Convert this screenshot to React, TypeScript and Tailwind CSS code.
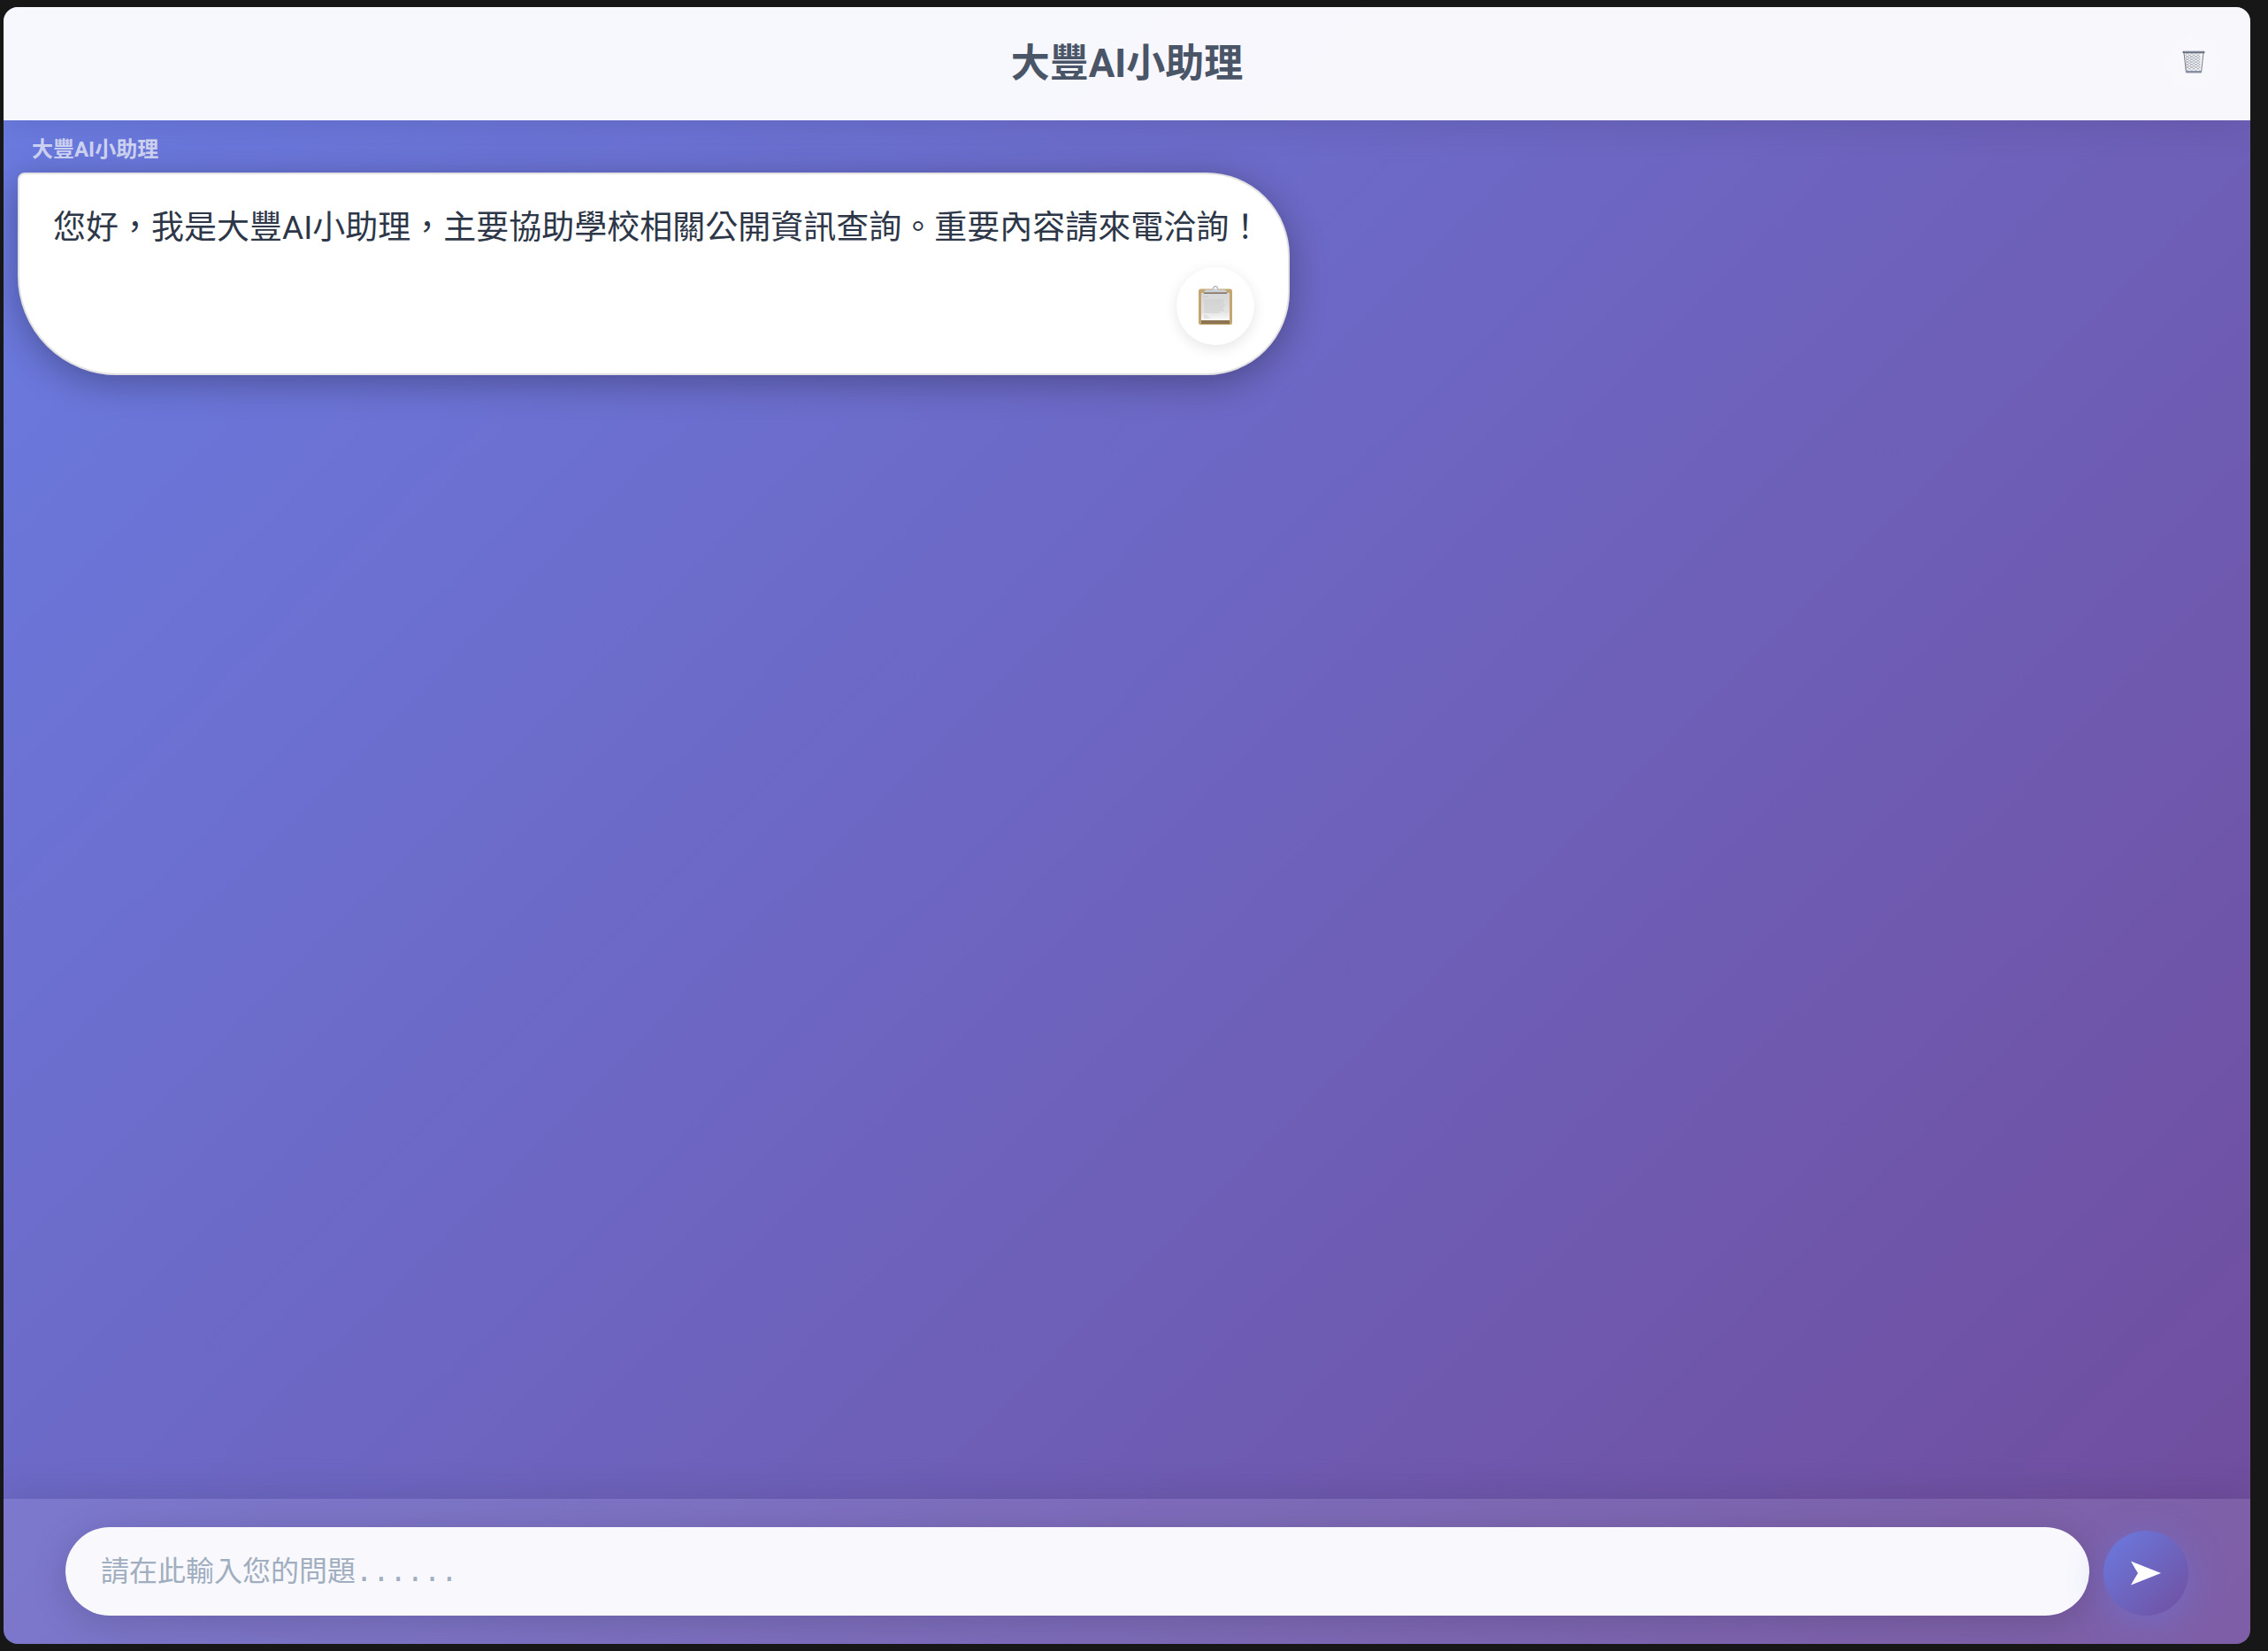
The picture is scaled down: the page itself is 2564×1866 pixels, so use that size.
import { useState } from 'react'

const ROWS = [5, 8, 11, 14, 17, 20]

function TrashIcon() {
  return (
    <svg viewBox="0 0 26 26" className="h-6.5 w-6.5" aria-hidden="true">
      <path d="M2 2.5 L24 2.5 L21.5 25 L4.5 25 Z" fill="#f4f5f8" />
      <g stroke="#a3a8b1" strokeWidth="0.7" fill="none">
        {ROWS.map((y) => (
          <g key={y}>
            <path d={`M3.5 ${y} l2.4 3 l2.4 -3 l2.4 3 l2.4 -3 l2.4 3 l2.4 -3 l2.4 3`} />
            <path d={`M3.5 ${y + 1} l2.4 -3 l2.4 3 l2.4 -3 l2.4 3 l2.4 -3 l2.4 3 l2.4 -3`} />
          </g>
        ))}
      </g>
      <path d="M2 2.5 L4.5 25 M24 2.5 L21.5 25" stroke="#7f8794" strokeWidth="1.1" />
      <rect x="0.5" y="0.8" width="25" height="2.4" rx="1" fill="#666e7d" />
      <path d="M2 1.6 H24" stroke="#9aa2af" strokeWidth="0.6" />
      <rect x="4" y="23" width="18" height="2.4" rx="0.8" fill="#8791a2" />
    </svg>
  )
}

function ClipboardIcon() {
  return (
    <svg viewBox="0 0 38 44" className="h-11 w-9.5" aria-hidden="true">
      <defs>
        <linearGradient id="paper" x1="0" y1="0" x2="0" y2="1">
          <stop offset="0" stopColor="#d6d6d6" />
          <stop offset="0.7" stopColor="#e4e4e4" />
          <stop offset="1" stopColor="#fbfbfb" />
        </linearGradient>
      </defs>
      <rect x="0" y="3.5" width="38" height="40.5" rx="2.5" fill="#c4a672" />
      <rect x="3" y="39" width="32" height="4" fill="#8d7453" />
      <rect x="3" y="8" width="32" height="31" fill="url(#paper)" />
      <g stroke="#c8c8c8" strokeWidth="0.8">
        <path d="M6 12.5 H10.5 M6 16 H28 M6 18 H29 M6 20 H28 M6 22 H30 M6 24 H29 M6 26 H28 M6 28 H29 M6 30 H24 M6 34 H10 M6 36 H13" />
      </g>
      <circle cx="19" cy="3.2" r="2.6" fill="#fff" stroke="#a9b3c0" strokeWidth="1.3" />
      <path d="M5.5 7.5 L8 4.5 H15.5 L17 3.5 H21 L22.5 4.5 H30 L32.5 7.5 Z" fill="#ccd2d9" />
      <path d="M6 8.3 H32" stroke="#7d6f65" strokeWidth="1.4" />
    </svg>
  )
}

function SendIcon() {
  return (
    <svg viewBox="0 0 34 28" className="h-7 w-8.5" aria-hidden="true">
      <path d="M0 0.5 L34 14 L0 27.5 Q5 18.5 8 14 Q5 9.5 0 0.5 Z" fill="#fff" />
    </svg>
  )
}

export default function App() {
  const [question, setQuestion] = useState('')

  return (
    <div className="h-screen bg-[#171717] pt-2 pr-5 pb-2 pl-1 font-[Roboto,'Noto_Sans_CJK_TC',sans-serif]">
      <div className="flex h-full flex-col overflow-hidden rounded-2xl bg-linear-[135deg,#6a7ce2_0%,#704c9c_100%]">
        <header className="relative z-10 flex h-32 shrink-0 items-center justify-center bg-white/95 shadow-[0_4px_40px_rgba(0,0,0,0.1)]">
          <h1 className="text-[44px] leading-[64px] font-bold text-[#4a5568]">大豐AI小助理</h1>
          <button
            type="button"
            aria-label="清除對話"
            className="absolute right-8 flex size-16 items-center justify-center rounded-full bg-white/20 pb-1"
          >
            <TrashIcon />
          </button>
        </header>

        <main className="flex flex-1 flex-col items-start px-4 pt-4">
          <p className="px-4 text-2xl leading-[34px] font-bold text-white/70">大豐AI小助理</p>
          <div className="mt-[9px] flex flex-col rounded-[94px] rounded-tl-lg rounded-bl-[112px] border-2 border-[#e2e2e2] bg-white pt-8 pr-[30px] pb-8 pl-[38px] shadow-[0_8px_40px_rgba(0,0,0,0.3)]">
            <p className="text-[37px] leading-[58px] text-[#2d3748]">
              您好，我是大豐AI小助理，主要協助學校相關公開資訊查詢。重要內容請來電洽詢！
            </p>
            <button
              type="button"
              aria-label="複製"
              className="mt-[15px] mr-2 flex size-22 items-center justify-center self-end rounded-full bg-white pb-0.5 shadow-[0_4px_16px_rgba(0,0,0,0.1)]"
            >
              <ClipboardIcon />
            </button>
          </div>
        </main>

        <footer className="shrink-0 bg-white/10 p-8 shadow-[0_-4px_40px_rgba(0,0,0,0.1)]">
          <form
            className="mx-auto flex max-w-[2400px] items-end gap-4"
            onSubmit={(e) => e.preventDefault()}
          >
            <input
              type="text"
              aria-label="問題"
              value={question}
              onChange={(e) => setQuestion(e.target.value)}
              placeholder="請在此輸入您的問題......"
              className="h-25 min-w-0 flex-1 rounded-full bg-[#f8f8fd] px-10 font-['DejaVu_Sans_Mono','Noto_Sans_CJK_TC',monospace] text-[32px] text-[#2d3748] shadow-[0_8px_40px_rgba(0,0,0,0.15)] outline-none placeholder:text-[#a0aec0]"
            />
            <button
              type="submit"
              aria-label="送出"
              className="flex size-24 shrink-0 items-center justify-center rounded-full bg-linear-[135deg,#6b7be0_0%,#704fa0_100%] shadow-[0_8px_40px_rgba(102,126,234,0.4)]"
            >
              <SendIcon />
            </button>
          </form>
        </footer>
      </div>
    </div>
  )
}
